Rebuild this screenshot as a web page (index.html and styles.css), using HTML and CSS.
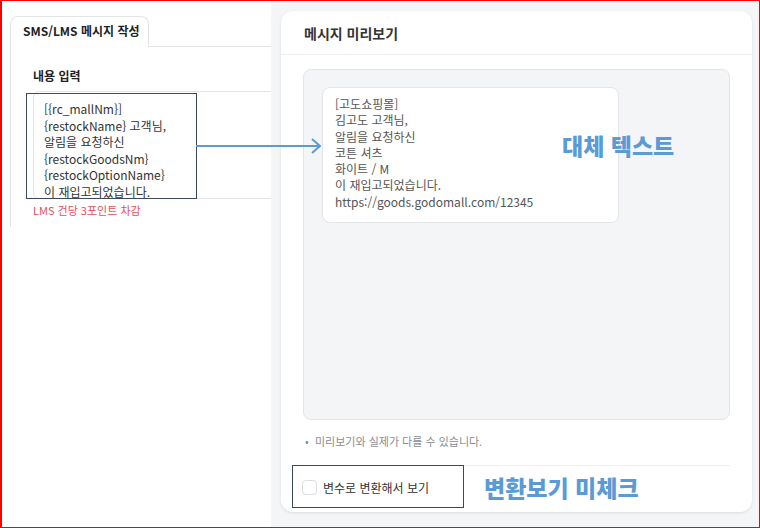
FILE: index.html
```html
<!DOCTYPE html>
<html lang="ko">
<head>
  <meta charset="UTF-8">
  <title>메시지 미리보기</title>
  <link rel="stylesheet" href="styles.css">
</head>
<body>

  <div class="frame">

    <!-- 작성 영역 -->
    <div class="compose">
      <div class="tab-row">
        <div class="tab">SMS/LMS 메시지 작성</div>
        <div class="tab-fill"></div>
      </div>
      <div class="panel">
        <div class="field-label">내용 입력</div>
        <div class="input-box">
          <p>[{rc_mallNm}]</p>
          <p>{restockName} 고객님,</p>
          <p>알림을 요청하신</p>
          <p>{restockGoodsNm}</p>
          <p>{restockOptionName}</p>
          <p>이 재입고되었습니다.</p>
        </div>
        <div class="cost">LMS 건당 3포인트 차감</div>
      </div>
    </div>

    <!-- 미리보기 영역 -->
    <div class="preview-side">
      <div class="card">
        <div class="card-head">메시지 미리보기</div>
        <div class="card-body">
          <div class="phone">
            <div class="bubble">
              <p>[고도쇼핑몰]</p>
              <p>김고도 고객님,</p>
              <p>알림을 요청하신</p>
              <p>코튼 셔츠</p>
              <p>화이트 / M</p>
              <p>이 재입고되었습니다.</p>
              <p>https://goods.godomall.com/12345</p>
            </div>
          </div>
          <div class="notice">미리보기와 실제가 다를 수 있습니다.</div>
          <label class="check-row">
            <span class="check"></span>
            <span>변수로 변환해서 보기</span>
          </label>
        </div>
      </div>
    </div>

    <!-- 🔹주석 표시 -->
    <div class="mark mark-input"></div>
    <div class="mark mark-check"></div>
    <svg class="arrow" width="128" height="18" viewBox="0 0 128 18">
      <line x1="0" y1="9" x2="124" y2="9" stroke="#5b9bd5" stroke-width="2"/>
      <polyline points="116,2 124,9 116,16" fill="none" stroke="#5b9bd5" stroke-width="2"/>
    </svg>
    <div class="note-label note-alt">대체 텍스트</div>
    <div class="note-label note-check">변환보기 미체크</div>

  </div>

</body>
</html>
```

FILE: styles.css
```css
* {
  box-sizing: border-box;
}

body {
  margin: 0;
  font-family: "Noto Sans CJK KR", "Noto Sans", sans-serif;
  color: #333;
}

p {
  margin: 0;
}

.frame {
  position: relative;
  display: flex;
  width: 760px;
  height: 528px;
  border: 1px solid #ff0000;
  border-left-width: 2px;
  background: #fff;
  overflow: hidden;
}

/* 🔹작성 영역 */
.compose {
  width: 269px;
  flex-shrink: 0;
  overflow: hidden;
  padding: 15px 0 0 8px;
}

.tab-row {
  display: flex;
}

.tab {
  width: 139px;
  height: 31px;
  border: 1px solid #e3e4e6;
  border-bottom: none;
  border-radius: 8px 8px 0 0;
  padding: 5px 0 0 12px;
  font-size: 12px;
  font-weight: 600;
  color: #222;
  white-space: nowrap;
  background: #fff;
}

.tab-fill {
  flex: 1;
  border-bottom: 1px solid #e3e4e6;
}

.panel {
  height: 180px;
  border-left: 1px solid #e3e4e6;
  padding: 21px 0 0 22px;
}

.field-label {
  font-size: 12px;
  font-weight: 700;
  line-height: 16px;
  color: #222;
}

.input-box {
  margin-top: 7px;
  width: 300px;
  height: 108px;
  border: 1px solid #e3e4e6;
  border-radius: 6px 0 0 6px;
  padding: 9px 10px;
  font-size: 12px;
  line-height: 16.5px;
  color: #333;
  overflow: hidden;
}

.cost {
  margin-top: 3px;
  font-size: 11px;
  line-height: 16px;
  color: #e5505c;
}

/* 🔹미리보기 영역 */
.preview-side {
  flex: 1;
  background: #f4f5f7;
  padding: 10px 7px 15px 10px;
}

.card {
  height: 100%;
  background: #fff;
  border-radius: 12px;
  box-shadow: 0 1px 3px rgba(0,0,0,0.1);
  display: flex;
  flex-direction: column;
}

.card-head {
  height: 44px;
  padding: 12px 0 0 23px;
  border-bottom: 1px solid #eceef1;
  font-size: 14px;
  font-weight: 700;
  color: #333;
}

.card-body {
  padding: 14px 22px 0 22px;
}

.phone {
  height: 351px;
  background: #f4f5f7;
  border: 1px solid #e3e5e9;
  border-radius: 8px;
  padding: 17px 0 0 18px;
}

.bubble {
  width: 297px;
  height: 136px;
  background: #fff;
  border: 1px solid #e3e5e9;
  border-radius: 8px;
  padding: 8px 12px;
  font-size: 12px;
  line-height: 16.3px;
  color: #555;
}

.notice {
  margin-top: 13px;
  padding-left: 12px;
  position: relative;
  font-size: 11px;
  line-height: 16px;
  color: #8a8d93;
}

.notice::before {
  content: "•";
  position: absolute;
  left: 2px;
  top: 0;
}

.check-row {
  display: flex;
  align-items: center;
  gap: 6px;
  margin-top: 16px;
  margin-left: -1px;
  height: 43px;
  border-top: 1px solid #eceef1;
  font-size: 12px;
  color: #333;
}

.check {
  width: 15px;
  height: 15px;
  border: 1px solid #dcdee2;
  border-radius: 4px;
  background: #fff;
}

/* 🔹주석 표시 */
.mark {
  position: absolute;
  border: 1px solid #3b4862;
}

.mark-input {
  left: 24px;
  top: 92px;
  width: 171px;
  height: 106px;
}

.mark-check {
  left: 290px;
  top: 464px;
  width: 172px;
  height: 43px;
}

.arrow {
  position: absolute;
  left: 194px;
  top: 136px;
}

.note-label {
  position: absolute;
  font-size: 23px;
  font-weight: 900;
  line-height: 26px;
  color: #5b9bd5;
  white-space: nowrap;
}

.note-alt {
  left: 560px;
  top: 131px;
}

.note-check {
  left: 482px;
  top: 473px;
}
```
